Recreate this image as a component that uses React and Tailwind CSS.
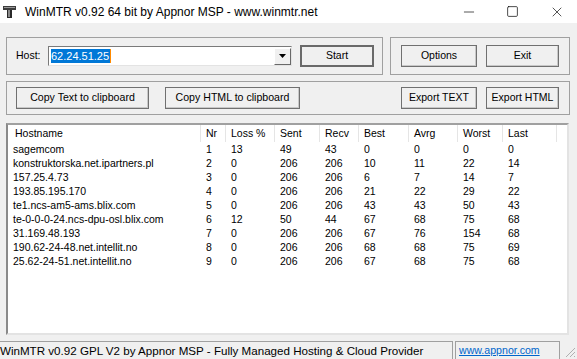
import { Minus, Square, X } from 'lucide-react'

const cols = [
  { key: 'host', title: 'Hostname', w: 'w-[193px]' },
  { key: 'nr', title: 'Nr', w: 'w-[25px]' },
  { key: 'loss', title: 'Loss %', w: 'w-[49px]' },
  { key: 'sent', title: 'Sent', w: 'w-[45px]' },
  { key: 'recv', title: 'Recv', w: 'w-[39px]' },
  { key: 'best', title: 'Best', w: 'w-[50px]' },
  { key: 'avrg', title: 'Avrg', w: 'w-[49px]' },
  { key: 'worst', title: 'Worst', w: 'w-[45px]' },
  { key: 'last', title: 'Last', w: 'w-[54px]' },
]

const hops = [
  ['sagemcom', 1, 13, 49, 43, 0, 0, 0, 0],
  ['konstruktorska.net.ipartners.pl', 2, 0, 206, 206, 10, 11, 22, 14],
  ['157.25.4.73', 3, 0, 206, 206, 6, 7, 14, 7],
  ['193.85.195.170', 4, 0, 206, 206, 21, 22, 29, 22],
  ['te1.ncs-am5-ams.blix.com', 5, 0, 206, 206, 43, 43, 50, 43],
  ['te-0-0-0-24.ncs-dpu-osl.blix.com', 6, 12, 50, 44, 67, 68, 75, 68],
  ['31.169.48.193', 7, 0, 206, 206, 67, 76, 154, 68],
  ['190.62-24-48.net.intellit.no', 8, 0, 206, 206, 68, 68, 75, 69],
  ['25.62-24-51.net.intellit.no', 9, 0, 206, 206, 67, 68, 75, 68],
]

function Btn({ children, className = '', strong }) {
  return (
    <button
      className={`flex h-[22px] items-center justify-center bg-[#f0f0f0] text-black ${
        strong
          ? 'border-2 border-[#6a6a6a]'
          : 'border border-[#707070] shadow-[inset_-1px_-1px_0_#c8c8c8]'
      } ${className}`}
    >
      {children}
    </button>
  )
}

function AppIcon() {
  return (
    <svg width="13" height="12" viewBox="0 0 13 12">
      <rect x="0" y="0" width="13" height="4" fill="#3c3c3c" />
      <rect x="1" y="1" width="11" height="1" fill="#9a9a9a" />
      <rect x="4" y="4" width="5" height="8" fill="#2a2a2a" />
      <rect x="5" y="4" width="2" height="7" fill="#8a8a8a" />
    </svg>
  )
}

export default function App() {
  return (
    <div className="flex h-[359px] w-[577px] flex-col overflow-hidden bg-[#f0f0f0] font-['Liberation_Sans',Arial,sans-serif] text-black">
      {/* title bar */}
      <div className="flex h-[23px] shrink-0 items-center bg-white">
        <div className="ml-[3px] flex w-[22px] items-center">
          <AppIcon />
        </div>
        <span className="text-[12px] leading-none">
          WinMTR v0.92 64 bit by Appnor MSP - www.winmtr.net
        </span>
        <div className="ml-auto flex items-center">
          <Minus className="mr-[29px] h-[16px] w-[16px]" strokeWidth={1} />
          <Square className="mr-[30px] h-[13px] w-[13px]" strokeWidth={1.3} />
          <X className="mr-[12px] h-[16px] w-[16px]" strokeWidth={1} />
        </div>
      </div>

      <div className="flex flex-1 flex-col px-[6px]">
        {/* row 1 */}
        <div className="mt-[14px] flex gap-[7px]">
          <div className="flex h-[38px] w-[377px] items-center border border-[#a0a0a0]">
            <span className="ml-[9px] w-[32px] text-[10.5px]">Host:</span>
            <div className="flex h-[20px] w-[244px] items-center border border-b-[#e3e3e3] border-l-[#7a7a7a] border-r-[#e3e3e3] border-t-[#7a7a7a] bg-white">
              <span className="ml-[2px] flex h-[14px] items-center bg-[#0078d7] pr-[1px] text-[11px] text-white">
                62.24.51.25
              </span>
              <span className="h-[14px] w-[1px] bg-[#ff8a00]" />
              <div className="ml-auto flex h-[17px] w-[17px] items-center justify-center border border-b-[#696969] border-l-[#ffffff] border-r-[#696969] border-t-[#ffffff] bg-[#f0f0f0]">
                <svg width="7" height="4" viewBox="0 0 7 4">
                  <path d="M0 0h7L3.5 4z" fill="#000" />
                </svg>
              </div>
            </div>
            <Btn strong className="ml-[8px] w-[74px] text-[10.5px]">
              Start
            </Btn>
          </div>
          <div className="flex h-[38px] w-[180px] items-center border border-[#a0a0a0]">
            <Btn className="ml-[10px] w-[76px] text-[10.5px]">Options</Btn>
            <Btn className="ml-[9px] w-[73px] text-[10.5px]">Exit</Btn>
          </div>
        </div>

        {/* row 2 */}
        <div className="mt-[6px] flex h-[34px] w-[564px] items-center border border-[#a0a0a0]">
          <Btn className="ml-[9px] w-[133px] text-[10.6px]">Copy Text to clipboard</Btn>
          <Btn className="ml-[16px] w-[135px] text-[10.6px]">Copy HTML to clipboard</Btn>
          <Btn className="ml-auto w-[76px] text-[10.5px]">Export TEXT</Btn>
          <Btn className="ml-[9px] mr-[10px] w-[73px] text-[10.5px]">Export HTML</Btn>
        </div>

        {/* list */}
        <div className="mt-[8px] flex h-[212px] w-[563px] flex-col border-2 border-b-[#e3e3e3] border-l-[#8a8a8a] border-r-[#e3e3e3] border-t-[#a0a0a0] bg-white text-[10.5px]">
          <div className="flex h-[17px] shrink-0">
            {cols.map((c) => (
              <div
                key={c.key}
                className={`${c.w} flex items-center border-r border-[#e5e5e5] ${
                  c.key === 'host' ? 'pl-[7px]' : 'pl-[5px]'
                }`}
              >
                {c.title}
              </div>
            ))}
          </div>
          {hops.map((row) => (
            <div key={row[1]} className="flex h-[14px] items-center">
              {row.map((v, i) => (
                <div key={i} className={`${cols[i].w} pl-[5px] leading-none`}>
                  {v}
                </div>
              ))}
            </div>
          ))}
        </div>

        {/* status bar */}
        <div className="-mx-[6px] mt-[6px] flex h-[18px]">
          <div className="flex w-[453px] items-center overflow-hidden whitespace-nowrap border-r border-t border-[#a0a0a0] text-[11.6px]">
            WinMTR v0.92 GPL V2 by Appnor MSP - Fully Managed Hosting &amp; Cloud Provider
          </div>
          <div className="ml-[2px] flex w-[105px] items-center border-l border-r border-t border-[#a0a0a0] pl-[3px]">
            <a href="#" className="text-[10.6px] text-[#0066cc] underline">
              www.appnor.com
            </a>
          </div>
          <div className="flex flex-1 items-end justify-end pr-[1px] pb-[1px]">
            <svg width="11" height="11" viewBox="0 0 11 11">
              <path d="M10 1L1 10M10 5L5 10M10 9L9 10" stroke="#b0b0b0" strokeWidth="1" />
            </svg>
          </div>
        </div>
      </div>
    </div>
  )
}
